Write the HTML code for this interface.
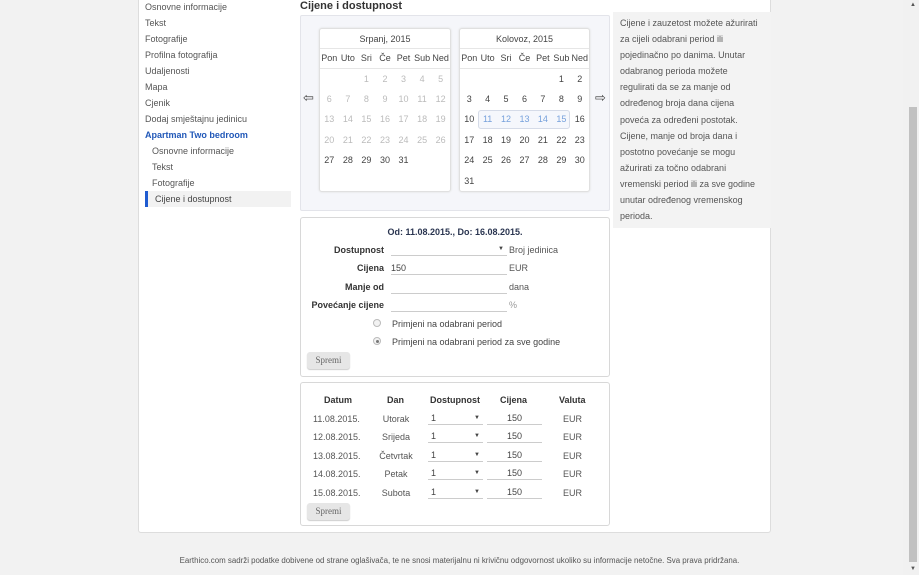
<!DOCTYPE html>
<html><head><meta charset="utf-8"><style>
*{margin:0;padding:0;box-sizing:border-box}
body{width:919px;height:575px;background:#f2f2f2;font-family:"Liberation Sans",Arial,sans-serif;font-size:9px;color:#444;position:relative;overflow:hidden}
.a{position:absolute}
#panel{left:138px;top:-2px;width:633px;height:535px;background:#fff;border:1px solid #ddd;border-top:none;border-radius:0 0 3px 3px}
.nav div{position:absolute;left:145px;font-size:9px;color:#555;white-space:nowrap}
.cal{background:#fff;border:1px solid #e0e0e0;border-radius:3px;box-shadow:0 0 2px #ddd}
.cal table{border-collapse:collapse;width:100%;table-layout:fixed}
.cal td{text-align:center;font-size:9px;height:20.5px;color:#444;padding:0;white-space:nowrap}
.cal td.m{color:#bbb}
.cal td.s{color:#2a6fc9}
.cal .t{height:20px;border-bottom:1px solid #e6e6e6;text-align:center;line-height:20px;font-size:9px}
.cal .h td{height:19px;border-bottom:1px solid #e6e6e6}
.box{background:#fff;border:1px solid #d8d8d8;border-radius:3px}
.lbl{position:absolute;text-align:right;font-weight:bold;color:#333;font-size:9px}
.inp{position:absolute;border-bottom:1px solid #ccc;height:12px;font-size:9px;color:#444;line-height:11px}
.ar{float:right;font-size:6px;margin-right:3px;line-height:11px}
.btn{position:absolute;background:#e6e6e6;border-radius:3px;font-family:"Liberation Serif",serif;font-size:9px;color:#666;text-align:center;line-height:17px;box-shadow:0 1px 1px #ccc}
</style></head><body>
<div class="a" id="panel"></div>
<div class="nav">
<div style="top:2px">Osnovne informacije</div>
<div style="top:18px">Tekst</div>
<div style="top:34px">Fotografije</div>
<div style="top:50px">Profilna fotografija</div>
<div style="top:66px">Udaljenosti</div>
<div style="top:82px">Mapa</div>
<div style="top:98px">Cjenik</div>
<div style="top:114px">Dodaj smještajnu jedinicu</div>
<div style="top:130px;color:#2158b8;font-weight:bold">Apartman Two bedroom</div>
<div style="top:146px;left:152px">Osnovne informacije</div>
<div style="top:162px;left:152px">Tekst</div>
<div style="top:178px;left:152px">Fotografije</div>
</div>
<div class="a" style="left:145px;top:191px;width:146px;height:16px;background:#f2f2f2;border-left:3px solid #1f5bd0"></div>
<div class="a" style="left:155px;top:194px;font-size:9px;color:#444">Cijene i dostupnost</div>
<div class="a" style="left:300px;top:0px;font-size:11px;font-weight:bold;color:#333">Cijene i dostupnost</div>

<div class="a" style="left:300px;top:15px;width:310px;height:196px;background:#f5f6fa;border:1px solid #e3e4ea;border-radius:2px"></div>
<div class="a" style="left:303px;top:90px;font-size:13px;color:#444">⇦</div>
<div class="a" style="left:595px;top:90px;font-size:13px;color:#444">⇨</div>

<div class="a cal" style="left:319px;top:28px;width:132px;height:164px">
<div class="t">Srpanj, 2015</div>
<table><tr class="h"><td>Pon</td><td>Uto</td><td>Sri</td><td>Če</td><td>Pet</td><td>Sub</td><td>Ned</td></tr>
<tr><td></td><td></td><td class="m">1</td><td class="m">2</td><td class="m">3</td><td class="m">4</td><td class="m">5</td></tr>
<tr><td class="m">6</td><td class="m">7</td><td class="m">8</td><td class="m">9</td><td class="m">10</td><td class="m">11</td><td class="m">12</td></tr>
<tr><td class="m">13</td><td class="m">14</td><td class="m">15</td><td class="m">16</td><td class="m">17</td><td class="m">18</td><td class="m">19</td></tr>
<tr><td class="m">20</td><td class="m">21</td><td class="m">22</td><td class="m">23</td><td class="m">24</td><td class="m">25</td><td class="m">26</td></tr>
<tr><td>27</td><td>28</td><td>29</td><td>30</td><td>31</td><td></td><td></td></tr></table>
</div>
<div class="a cal" style="left:459px;top:28px;width:131px;height:164px">
<div class="t">Kolovoz, 2015</div>
<table><tr class="h"><td>Pon</td><td>Uto</td><td>Sri</td><td>Če</td><td>Pet</td><td>Sub</td><td>Ned</td></tr>
<tr><td></td><td></td><td></td><td></td><td></td><td>1</td><td>2</td></tr>
<tr><td>3</td><td>4</td><td>5</td><td>6</td><td>7</td><td>8</td><td>9</td></tr>
<tr><td>10</td><td class="s">11</td><td class="s">12</td><td class="s">13</td><td class="s">14</td><td class="s">15</td><td>16</td></tr>
<tr><td>17</td><td>18</td><td>19</td><td>20</td><td>21</td><td>22</td><td>23</td></tr>
<tr><td>24</td><td>25</td><td>26</td><td>27</td><td>28</td><td>29</td><td>30</td></tr>
<tr><td>31</td><td></td><td></td><td></td><td></td><td></td><td></td></tr></table>
</div>
<div class="a" style="left:478px;top:110px;width:92px;height:19px;border:1px solid #d5dbe8;border-radius:3px;background:rgba(230,236,248,.4)"></div>

<div class="a" style="left:613px;top:12px;width:158px;height:216px;background:#f3f3f3"></div>
<div class="a" style="left:620px;top:15px;width:143px;font-size:9px;line-height:16.1px;color:#555">Cijene i zauzetost možete ažurirati za cijeli odabrani period ili pojedinačno po danima. Unutar odabranog perioda možete regulirati da se za manje od određenog broja dana cijena poveća za određeni postotak. Cijene, manje od broja dana i postotno povećanje se mogu ažurirati za točno odabrani vremenski period ili za sve godine unutar određenog vremenskog perioda.</div>

<div class="a box" style="left:300px;top:217px;width:310px;height:160px"></div>
<div class="a" style="left:300px;top:227px;width:310px;text-align:center;font-weight:bold;color:#2a3550;font-size:9px">Od: 11.08.2015., Do: 16.08.2015.</div>
<div class="lbl" style="left:300px;width:84px;top:245px">Dostupnost</div>
<div class="lbl" style="left:300px;width:84px;top:263px">Cijena</div>
<div class="lbl" style="left:300px;width:84px;top:282px">Manje od</div>
<div class="lbl" style="left:300px;width:84px;top:300px">Povećanje cijene</div>
<div class="inp" style="left:391px;top:244px;width:116px"><span class="ar">▼</span></div>
<div class="inp" style="left:391px;top:263px;width:116px">150</div>
<div class="inp" style="left:391px;top:282px;width:116px"></div>
<div class="inp" style="left:391px;top:300px;width:116px"></div>
<div class="a" style="left:509px;top:245px;color:#555">Broj jedinica</div>
<div class="a" style="left:509px;top:263px;color:#555">EUR</div>
<div class="a" style="left:509px;top:282px;color:#555">dana</div>
<div class="a" style="left:509px;top:300px;color:#999">%</div>
<div class="a" style="left:373px;top:319px;width:8px;height:8px;border-radius:50%;border:1px solid #bbb;background:#f2f2f2"></div>
<div class="a" style="left:373px;top:337px;width:8px;height:8px;border-radius:50%;border:1px solid #bbb;background:#f2f2f2"><div style="margin:1.5px;width:3px;height:3px;border-radius:50%;background:#777"></div></div>
<div class="a" style="left:392px;top:319px;color:#444">Primjeni na odabrani period</div>
<div class="a" style="left:392px;top:337px;color:#444">Primjeni na odabrani period za sve godine</div>
<div class="btn" style="left:307px;top:352px;width:43px;height:17px">Spremi</div>

<div class="a box" style="left:300px;top:382px;width:310px;height:144px"></div>
<div class="a" style="left:324px;top:395px;font-weight:bold;color:#333">Datum</div>
<div class="a" style="left:387px;top:395px;font-weight:bold;color:#333">Dan</div>
<div class="a" style="left:430px;top:395px;font-weight:bold;color:#333">Dostupnost</div>
<div class="a" style="left:500px;top:395px;font-weight:bold;color:#333">Cijena</div>
<div class="a" style="left:559px;top:395px;font-weight:bold;color:#333">Valuta</div>

<div class="a" style="left:313px;top:414px;color:#555">11.08.2015.</div><div class="a" style="left:370px;top:414px;width:52px;text-align:center;color:#555">Utorak</div>
<div class="a" style="left:313px;top:432px;color:#555">12.08.2015.</div><div class="a" style="left:370px;top:432px;width:52px;text-align:center;color:#555">Srijeda</div>
<div class="a" style="left:313px;top:451px;color:#555">13.08.2015.</div><div class="a" style="left:370px;top:451px;width:52px;text-align:center;color:#555">Četvrtak</div>
<div class="a" style="left:313px;top:469px;color:#555">14.08.2015.</div><div class="a" style="left:370px;top:469px;width:52px;text-align:center;color:#555">Petak</div>
<div class="a" style="left:313px;top:488px;color:#555">15.08.2015.</div><div class="a" style="left:370px;top:488px;width:52px;text-align:center;color:#555">Subota</div>

<div class="inp" style="left:428px;top:413px;width:55px;padding-left:3px">1<span class="ar">▼</span></div>
<div class="inp" style="left:428px;top:431px;width:55px;padding-left:3px">1<span class="ar">▼</span></div>
<div class="inp" style="left:428px;top:450px;width:55px;padding-left:3px">1<span class="ar">▼</span></div>
<div class="inp" style="left:428px;top:468px;width:55px;padding-left:3px">1<span class="ar">▼</span></div>
<div class="inp" style="left:428px;top:487px;width:55px;padding-left:3px">1<span class="ar">▼</span></div>
<div class="inp" style="left:487px;top:413px;width:55px;text-align:center">150</div>
<div class="inp" style="left:487px;top:431px;width:55px;text-align:center">150</div>
<div class="inp" style="left:487px;top:450px;width:55px;text-align:center">150</div>
<div class="inp" style="left:487px;top:468px;width:55px;text-align:center">150</div>
<div class="inp" style="left:487px;top:487px;width:55px;text-align:center">150</div>
<div class="a" style="left:563px;top:414px;color:#555">EUR</div>
<div class="a" style="left:563px;top:432px;color:#555">EUR</div>
<div class="a" style="left:563px;top:451px;color:#555">EUR</div>
<div class="a" style="left:563px;top:469px;color:#555">EUR</div>
<div class="a" style="left:563px;top:488px;color:#555">EUR</div>
<div class="btn" style="left:307px;top:503px;width:43px;height:17px">Spremi</div>

<div class="a" style="left:0;top:556px;width:919px;text-align:center;font-size:7.9px;color:#555;white-space:nowrap">Earthico.com sadrži podatke dobivene od strane oglašivača, te ne snosi materijalnu ni krivičnu odgovornost ukoliko su informacije netočne. Sva prava pridržana.</div>

<div class="a" style="left:903px;top:0;width:16px;height:575px;background:#f1f1f1"></div>
<div class="a" style="left:909px;top:107px;width:8px;height:455px;background:#c1c1c1"></div>
<div class="a" style="left:910px;top:2px;font-size:6px;color:#555">▲</div>
<div class="a" style="left:910px;top:566px;font-size:6px;color:#555">▼</div>
</body></html>
